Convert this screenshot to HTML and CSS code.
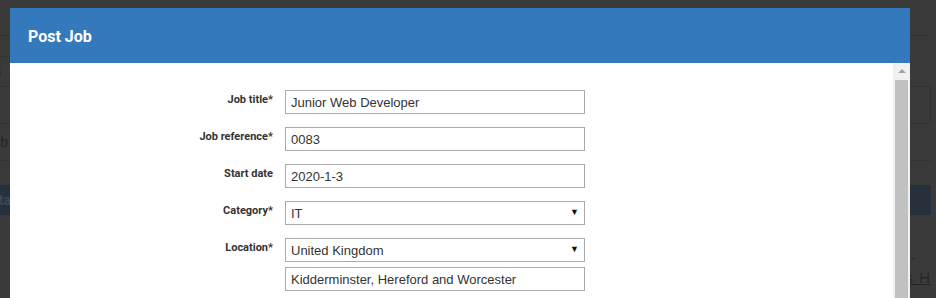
FILE: index.html
```html
<!DOCTYPE html>
<html lang="en">
<head>
  <meta charset="UTF-8">
  <title>Post Job</title>
  <link rel="stylesheet" href="styles.css">
</head>
<body>
  <div class="page">
    <div class="topbar"></div>
    <div class="subnav">
      <div class="crumb"></div>
      <div class="crumb-text">Applications</div>
    </div>
    <div class="row row-split"></div>
    <div class="row"><span class="row-text">Tab</span></div>
    <div class="gap"></div>
    <div class="bar"><span class="bar-text">Details</span></div>
    <div class="list">
      <div class="dash">-</div>
      <a class="link">Business H</a>
    </div>
  </div>

  <div class="modal">
    <div class="modal-header">
      <h2>Post Job</h2>
    </div>
    <div class="modal-body">
      <form class="form">
        <label class="label">Job title*</label>
        <div class="field"><input class="input" type="text" value="Junior Web Developer"></div>

        <label class="label">Job reference*</label>
        <div class="field"><input class="input" type="text" value="0083"></div>

        <label class="label">Start date</label>
        <div class="field"><input class="input" type="text" value="2020-1-3"></div>

        <label class="label">Category*</label>
        <div class="field">
          <div class="select"><select><option>IT</option></select></div>
        </div>

        <label class="label">Location*</label>
        <div class="field">
          <div class="select"><select><option>United Kingdom</option></select></div>
          <input class="input input-sub" type="text" value="Kidderminster, Hereford and Worcester">
        </div>
      </form>
      <div class="scrollbar">
        <div class="scroll-up"></div>
        <div class="scroll-thumb"></div>
      </div>
    </div>
  </div>
</body>
</html>
```

FILE: styles.css
```css
body {
  margin: 0;
  background: #3a3a3a;
  font-family: Roboto, 'Liberation Sans', sans-serif;
  height: 298px;
  overflow: hidden;
}

/* dimmed page behind the dialog */
.page {
  width: 931px;
  color: #262626;
  font-size: 14px;
}

.topbar {
  height: 35px;
  border-bottom: 1px solid #323232;
}

.subnav {
  height: 50px;
  border-bottom: 1px solid #323232;
}

.crumb {
  width: 200px;
  height: 20px;
  border-bottom: 1px solid #323232;
}

.crumb-text {
  margin-left: -76px;
  margin-top: 6px;
  font-size: 14px;
}

.row {
  height: 36px;
  border-bottom: 1px solid #323232;
  line-height: 36px;
}

.row-split {
  border-right: 1px solid #323232;
}

.row-text {
  margin-left: -15px;
  font-size: 14px;
}

.gap {
  height: 24px;
}

.bar {
  height: 30px;
  background: #27313b;
  line-height: 30px;
  color: #3a4756;
}

.bar-text {
  margin-left: -18px;
  font-weight: bold;
}

.list {
  text-align: right;
  padding-top: 33px;
  overflow: hidden;
  white-space: nowrap;
}

.dash {
  margin-right: 16px;
  line-height: 20px;
}

.link {
  display: inline-block;
  text-decoration: underline;
  line-height: 20px;
  font-family: 'Liberation Sans', sans-serif;
  font-size: 15px;
  letter-spacing: 1px;
}

/* dialog */
.modal {
  position: fixed;
  top: 8px;
  left: 10px;
  width: 900px;
  height: 320px;
  background: #fff;
  display: flex;
  flex-direction: column;
}

.modal-header {
  height: 55px;
  background: #3479bb;
  display: flex;
  align-items: center;
  padding-left: 18px;
}

.modal-header h2 {
  margin: 0;
  color: #fff;
  font-size: 16px;
  font-weight: bold;
  padding-top: 1px;
}

.modal-body {
  flex: 1;
  display: flex;
}

.form {
  flex: 1;
  display: grid;
  grid-template-columns: 263px 300px;
  column-gap: 12px;
  row-gap: 13px;
  align-content: start;
  padding-top: 27px;
}

.label {
  text-align: right;
  font-size: 11px;
  font-weight: bold;
  color: #333;
  line-height: 14px;
  padding-top: 3px;
}

.field {
  display: flex;
  flex-direction: column;
  gap: 5px;
}

.input, .select select {
  box-sizing: border-box;
  width: 300px;
  height: 24px;
  margin: 0;
  padding: 0 5px;
  border: 1px solid #aaa;
  border-radius: 0;
  font-family: 'Liberation Sans', Arial, sans-serif;
  font-size: 13px;
  color: #333;
  background: #fff;
  outline: none;
}

.select {
  position: relative;
  width: 300px;
}

.select select {
  appearance: none;
  -webkit-appearance: none;
  display: block;
}

.select::after {
  content: "\25BC";
  position: absolute;
  right: 6px;
  top: 7px;
  font-size: 9px;
  line-height: 9px;
  color: #111;
  pointer-events: none;
}

.scrollbar {
  width: 17px;
  background: #f1f1f1;
  display: flex;
  flex-direction: column;
  align-items: center;
}

.scroll-up {
  margin-top: 6px;
  width: 0;
  height: 0;
  border-left: 4px solid transparent;
  border-right: 4px solid transparent;
  border-bottom: 4px solid #a3a3a3;
}

.scroll-thumb {
  margin-top: 7px;
  width: 13px;
  flex: 1;
  background: #c1c1c1;
}
```
